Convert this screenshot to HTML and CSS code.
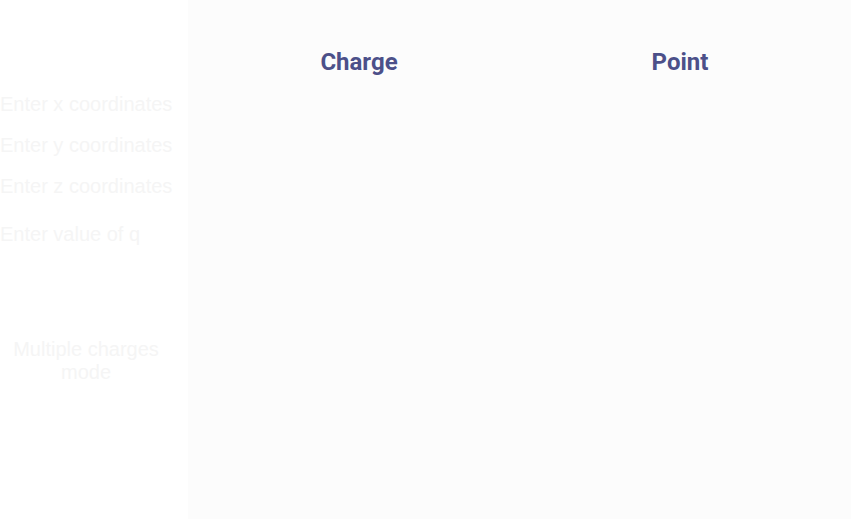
FILE: index.html
```html
<!DOCTYPE html>
<html>
<head>
<meta charset="utf-8">
<link rel="stylesheet" href="styles.css">
</head>
<body>
<div class="app">
  <aside class="sidebar">
    <div class="fields">
      <input class="field" type="text" placeholder="Enter x coordinates">
      <input class="field" type="text" placeholder="Enter y coordinates">
      <input class="field" type="text" placeholder="Enter z coordinates">
      <input class="field field-q" type="text" placeholder="Enter value of q">
    </div>
    <button class="mode-btn">Multiple charges mode</button>
  </aside>
  <main class="main">
    <section class="col"><h2 class="col-title">Charge</h2></section>
    <section class="col"><h2 class="col-title">Point</h2></section>
  </main>
</div>
</body>
</html>
```
FILE: styles.css
```css
html, body {
  margin: 0;
  padding: 0;
  height: 100%;
  background: #ffffff;
}
.app {
  display: flex;
  height: 519px;
  width: 851px;
}
.sidebar {
  width: 188px;
  flex: none;
  background: #ffffff;
  display: flex;
  flex-direction: column;
}
.fields {
  display: flex;
  flex-direction: column;
  padding-top: 93px;
}
.field {
  border: none;
  outline: none;
  background: transparent;
  padding: 0;
  margin: 0 0 18px 0;
  height: 23px;
  width: 188px;
  font-family: "Liberation Sans", Arial, sans-serif;
  font-size: 20px;
  color: #f5f5f5;
}
.field::placeholder {
  color: #f5f5f5;
  opacity: 1;
}
.field-q {
  margin-top: 7px;
}
.mode-btn {
  margin-top: 74px;
  width: 172px;
  border: none;
  background: transparent;
  padding: 0;
  font-family: "Liberation Sans", Arial, sans-serif;
  font-size: 20px;
  line-height: 23px;
  color: #f5f5f5;
  text-align: center;
}
.main {
  flex: 1;
  background: #fcfcfc;
  display: grid;
  grid-template-columns: 1fr 1fr;
  padding: 0 10.5px;
  align-content: start;
}
.col {
  text-align: center;
}
.col-title {
  margin: 47px 0 0 0;
  font-family: Roboto, "Noto Sans", sans-serif;
  font-weight: 700;
  font-size: 24px;
  line-height: 30px;
  color: #4c5089;
}
```
